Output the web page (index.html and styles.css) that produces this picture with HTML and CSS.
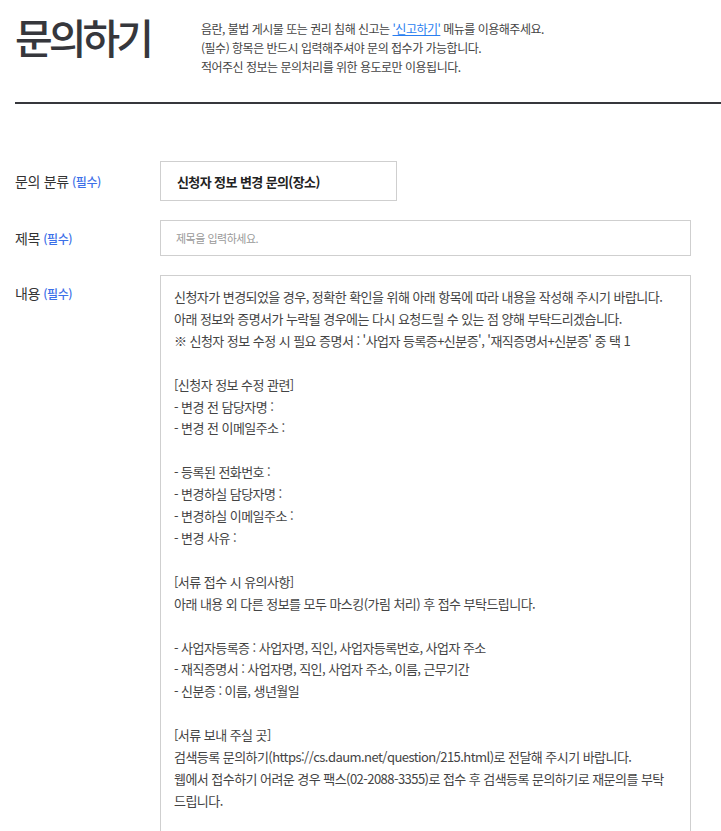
FILE: index.html
```html
<!DOCTYPE html>
<html lang="ko">
<head>
<meta charset="utf-8">
<title>문의하기</title>
<link rel="stylesheet" href="styles.css">
</head>
<body>
<div class="page">
  <header class="head">
    <h1 class="title">문의하기</h1>
    <div class="desc">
      <p>음란, 불법 게시물 또는 권리 침해 신고는 <a href="#" class="link">'신고하기'</a> 메뉴를 이용해주세요.</p>
      <p>(필수) 항목은 반드시 입력해주셔야 문의 접수가 가능합니다.</p>
      <p>적어주신 정보는 문의처리를 위한 용도로만 이용됩니다.</p>
    </div>
  </header>
  <form class="form">
    <div class="row row-cat">
      <div class="label">문의 분류<span class="req">(필수)</span></div>
      <div class="field"><div class="select">신청자 정보 변경 문의(장소)</div></div>
    </div>
    <div class="row row-subj">
      <div class="label">제목<span class="req">(필수)</span></div>
      <div class="field"><div class="input">제목을 입력하세요.</div></div>
    </div>
    <div class="row row-body">
      <div class="label label-top">내용<span class="req">(필수)</span></div>
      <div class="field"><div class="textarea">신청자가 변경되었을 경우, 정확한 확인을 위해 아래 항목에 따라 내용을 작성해 주시기 바랍니다.
아래 정보와 증명서가 누락될 경우에는 다시 요청드릴 수 있는 점 양해 부탁드리겠습니다.
※ 신청자 정보 수정 시 필요 증명서 : '사업자 등록증+신분증', '재직증명서+신분증' 중 택 1

[신청자 정보 수정 관련]
- 변경 전 담당자명 :
- 변경 전 이메일주소 :

- 등록된 전화번호 :
- 변경하실 담당자명 :
- 변경하실 이메일주소 :
- 변경 사유 :

[서류 접수 시 유의사항]
아래 내용 외 다른 정보를 모두 마스킹(가림 처리) 후 접수 부탁드립니다.

- 사업자등록증 : 사업자명, 직인, 사업자등록번호, 사업자 주소
- 재직증명서 : 사업자명, 직인, 사업자 주소, 이름, 근무기간
- 신분증 : 이름, 생년월일

[서류 보내 주실 곳]
검색등록 문의하기(https://cs.daum.net/question/215.html)로 전달해 주시기 바랍니다.
웹에서 접수하기 어려운 경우 팩스(02-2088-3355)로 접수 후 검색등록 문의하기로 재문의를 부탁 드립니다.
</div></div>
    </div>
  </form>
</div>
</body>
</html>
```
FILE: styles.css
```css
* { box-sizing: border-box; }
html, body { margin: 0; padding: 0; background: #fff; }
body {
  font-family: "Noto Sans CJK KR", "Noto Sans", sans-serif;
  color: #333;
  overflow: hidden;
}
.page { padding-left: 15px; }
.head {
  display: flex;
  align-items: flex-start;
  padding-top: 12px;
  height: 104px;
  border-bottom: 2px solid #36373c;
}
.title {
  margin: 0;
  width: 186px;
  font-size: 41px;
  font-weight: 500;
  line-height: 48px;
  letter-spacing: -4px;
  color: #36373c;
}
.desc {
  padding-top: 7px;
  font-size: 12px;
  line-height: 19px;
  letter-spacing: -0.5px;
  color: #444;
}
.desc p { margin: 0; }
.link { color: #2a7ef0; text-decoration: underline; }
.form {
  padding-top: 57px;
  padding-right: 30px;
  display: flex;
  flex-direction: column;
  gap: 19px;
}
.row { display: flex; align-items: center; }
.row-body { align-items: flex-start; }
.label {
  width: 145px;
  flex: none;
  font-size: 14px;
  letter-spacing: -0.3px;
  color: #333;
}
.label-top { padding-top: 8px; }
.req {
  margin-left: 3px;
  font-size: 12px;
  font-weight: 500;
  color: #3b6fe8;
  letter-spacing: -0.4px;
}
.field { flex: 1; }
.select {
  width: 237px;
  height: 40px;
  border: 1px solid #cfcfcf;
  padding-left: 16px;
  display: flex;
  align-items: center;
  font-size: 13px;
  font-weight: 700;
  letter-spacing: -0.6px;
  color: #222;
}
.input {
  height: 36px;
  border: 1px solid #cfcfcf;
  padding-left: 15px;
  display: flex;
  align-items: center;
  font-size: 11px;
  letter-spacing: -0.5px;
  color: #999;
}
.textarea {
  height: 600px;
  border: 1px solid #cfcfcf;
  padding: 10px 12px 0 13px;
  white-space: pre-wrap;
  word-break: keep-all;
  font-size: 13px;
  line-height: 21.9px;
  letter-spacing: -0.55px;
  color: #444;
}
```
